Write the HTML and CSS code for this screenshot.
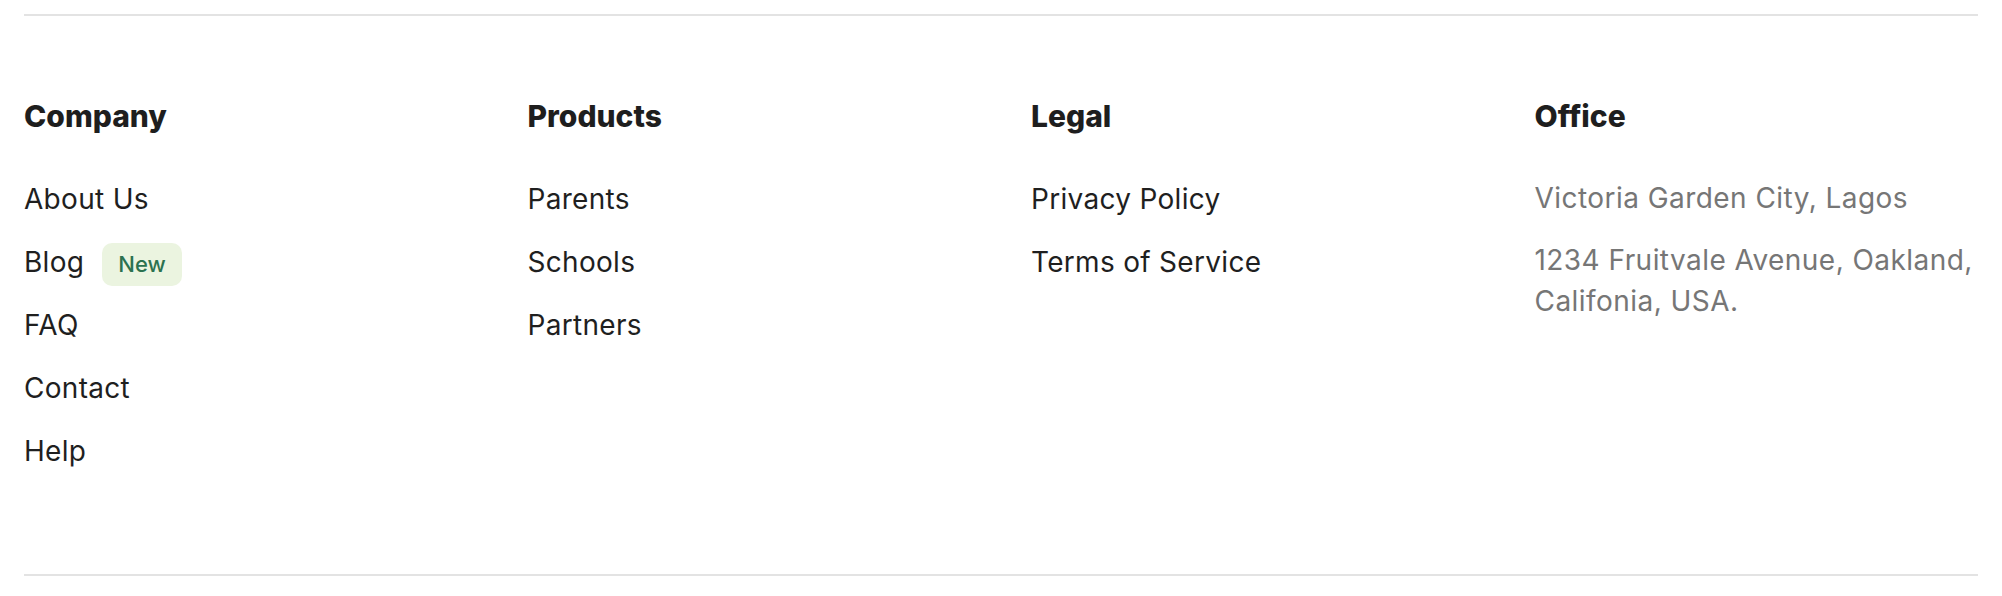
FILE: index.html
```html
<!DOCTYPE html>
<html lang="en">
<head>
<meta charset="utf-8">
<title>Footer</title>
<link rel="stylesheet" href="styles.css">
</head>
<body>
<footer class="footer">
  <div class="rule"></div>
  <div class="cols">
    <section class="col">
      <h3 class="col-title">Company</h3>
      <ul class="links">
        <li><a href="#">About Us</a></li>
        <li><a href="#">Blog</a><span class="badge">New</span></li>
        <li><a href="#">FAQ</a></li>
        <li><a href="#">Contact</a></li>
        <li><a href="#">Help</a></li>
      </ul>
    </section>
    <section class="col">
      <h3 class="col-title">Products</h3>
      <ul class="links">
        <li><a href="#">Parents</a></li>
        <li><a href="#">Schools</a></li>
        <li><a href="#">Partners</a></li>
      </ul>
    </section>
    <section class="col">
      <h3 class="col-title">Legal</h3>
      <ul class="links">
        <li><a href="#">Privacy Policy</a></li>
        <li><a href="#">Terms of Service</a></li>
      </ul>
    </section>
    <section class="col">
      <h3 class="col-title">Office</h3>
      <ul class="links office">
        <li>Victoria Garden City, Lagos</li>
        <li>1234 Fruitvale Avenue, Oakland,<br>Califonia, USA.</li>
      </ul>
    </section>
  </div>
  <div class="rule"></div>
</footer>
</body>
</html>
```

FILE: styles.css
```css
* {
  box-sizing: border-box;
}

html, body {
  margin: 0;
  padding: 0;
  background: #ffffff;
}

body {
  font-family: Inter, "Open Sans", "Liberation Sans", sans-serif;
  color: #1f1f1f;
}

.footer {
  padding: 14px 24px 0;
}

.rule {
  height: 2px;
  background: #e3e3e3;
}

.cols {
  display: grid;
  grid-template-columns: repeat(4, 1fr);
  column-gap: 60px;
  padding: 82px 0 101.5px;
}

.col-title {
  margin: 0 0 44px;
  font-size: 30px;
  line-height: 36px;
  font-weight: 800;
  color: #1e1e1e;
  letter-spacing: 0;
}

.links {
  list-style: none;
  margin: 0;
  padding: 0;
  display: flex;
  flex-direction: column;
  gap: 21px;
}

.links li {
  font-size: 28px;
  line-height: 42px;
  font-weight: 400;
  letter-spacing: 0.3px;
}

.links a {
  color: #1f1f1f;
  text-decoration: none;
}

.office li {
  color: #767676;
  white-space: nowrap;
  line-height: 41px;
  letter-spacing: 0.45px;
}

.badge {
  display: inline-block;
  margin-left: 18px;
  margin-bottom: -3px;
  padding: 7px 16px;
  font-size: 22px;
  line-height: 29px;
  font-weight: 500;
  letter-spacing: 0;
  color: #2c7250;
  background: #ebf4e0;
  border-radius: 10px;
}
```
